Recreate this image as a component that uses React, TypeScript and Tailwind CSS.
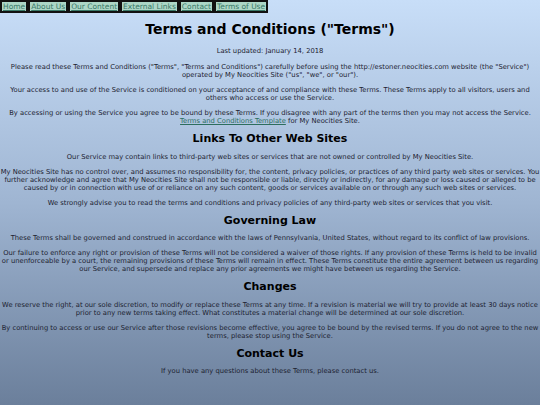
import React from "react";

const navLinks = ["Home", "About Us", "Our Content", "External Links", "Contact", "Terms of Use"];

function P({ children }: { children: React.ReactNode }) {
  return <p className="my-[7px] text-[6.78px] leading-[8px] text-[#1c2230]">{children}</p>;
}

function H2({ children }: { children: React.ReactNode }) {
  return <h2 className="mt-[7px] mb-[7.5px] text-[11px] font-bold leading-[13px] text-black">{children}</h2>;
}

export default function App() {
  return (
    <div
      className="min-h-[405px] w-full bg-gradient-to-b from-[#c8def8] via-[#9fb5d2] to-[#6b7f9b] text-center"
      style={{ fontFamily: '"DejaVu Sans", Verdana, sans-serif' }}
    >
      {/* Nav */}
      <nav className="flex text-[7.5px] leading-[9px]">
        {navLinks.map((l) => (
          <a
            key={l}
            href="#"
            className="border-2 border-[#111] bg-[#acd6c6] px-[1px] text-[#3a7a68] underline"
          >
            {l}
          </a>
        ))}
      </nav>

      <h1 className="mt-[8px] mb-[9px] text-[14px] font-bold leading-[17px] text-black">
        Terms and Conditions ("Terms")
      </h1>

      <P>Last updated: January 14, 2018</P>

      <div className="mt-[8px]">
        <P>
          Please read these Terms and Conditions ("Terms", "Terms and Conditions") carefully before using the
          http://estoner.neocities.com website (the "Service") operated by My Neocities Site ("us", "we", or "our").
        </P>
      </div>
      <P>
        Your access to and use of the Service is conditioned on your acceptance of and compliance with these Terms.
        These Terms apply to all visitors, users and others who access or use the Service.
      </P>
      <P>
        By accessing or using the Service you agree to be bound by these Terms. If you disagree with any part of the
        terms then you may not access the Service.{" "}
        <a href="#" className="text-[#2d6e5e] underline">
          Terms and Conditions Template
        </a>{" "}
        for My Neocities Site.
      </P>

      <H2>Links To Other Web Sites</H2>
      <P>
        Our Service may contain links to third-party web sites or services that are not owned or controlled by My
        Neocities Site.
      </P>
      <P>
        My Neocities Site has no control over, and assumes no responsibility for, the content, privacy policies, or
        practices of any third party web sites or services. You further acknowledge and agree that My Neocities Site
        shall not be responsible or liable, directly or indirectly, for any damage or loss caused or alleged to be
        caused by or in connection with use of or reliance on any such content, goods or services available on or
        through any such web sites or services.
      </P>
      <P>
        We strongly advise you to read the terms and conditions and privacy policies of any third-party web sites or
        services that you visit.
      </P>

      <H2>Governing Law</H2>
      <P>
        These Terms shall be governed and construed in accordance with the laws of Pennsylvania, United States, without
        regard to its conflict of law provisions.
      </P>
      <P>
        Our failure to enforce any right or provision of these Terms will not be considered a waiver of those rights. If
        any provision of these Terms is held to be invalid or unenforceable by a court, the remaining provisions of
        these Terms will remain in effect. These Terms constitute the entire agreement between us regarding our
        Service, and supersede and replace any prior agreements we might have between us regarding the Service.
      </P>

      <H2>Changes</H2>
      <P>
        We reserve the right, at our sole discretion, to modify or replace these Terms at any time. If a revision is
        material we will try to provide at least 30 days notice prior to any new terms taking effect. What constitutes a
        material change will be determined at our sole discretion.
      </P>
      <P>
        By continuing to access or use our Service after those revisions become effective, you agree to be bound by the
        revised terms. If you do not agree to the new terms, please stop using the Service.
      </P>

      <H2>Contact Us</H2>
      <P>If you have any questions about these Terms, please contact us.</P>
    </div>
  );
}
